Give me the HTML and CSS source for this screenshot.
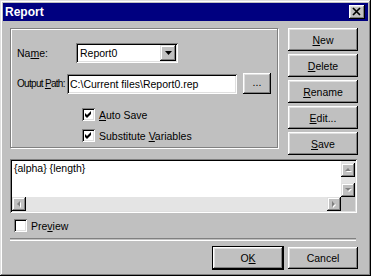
FILE: index.html
```html
<!DOCTYPE html>
<html lang="en">
<head>
    <meta charset="UTF-8">
    <title>Report</title>
    <link rel="stylesheet" href="styles.css">
</head>
<body>
    <div class="window">
        <div class="titlebar">
            <span class="title">Report</span>
            <span class="close-btn">
                <svg width="16" height="14" viewBox="0 0 16 14">
                    <path d="M4 3 L11 10 M11 3 L4 10" stroke="#000" stroke-width="1.7" fill="none"/>
                </svg>
            </span>
        </div>

        <div class="content">
            <div class="top">
                <div class="group">
                    <div class="row row-name">
                        <label class="lbl lbl-name">Na<u>m</u>e:</label>
                        <div class="combo">
                            <span class="combo-text">Report0</span>
                            <span class="combo-btn">
                                <svg width="7" height="4" viewBox="0 0 7 4"><path d="M0 0 H7 L3.5 4 Z" fill="#000"/></svg>
                            </span>
                        </div>
                    </div>
                    <div class="row row-path">
                        <label class="lbl lbl-path">Output <u>P</u>ath:</label>
                        <div class="field">C:\Current files\Report0.rep</div>
                        <span class="btn btn-browse">...</span>
                    </div>
                    <div class="check-row check-first">
                        <span class="check">
                            <svg width="9" height="9" viewBox="0 0 9 9"><polygon points="1,3 3,5 7,1 7,4 3,8 1,6" fill="#000"/></svg>
                        </span>
                        <span><u>A</u>uto Save</span>
                    </div>
                    <div class="check-row">
                        <span class="check">
                            <svg width="9" height="9" viewBox="0 0 9 9"><polygon points="1,3 3,5 7,1 7,4 3,8 1,6" fill="#000"/></svg>
                        </span>
                        <span>Substitute <u>V</u>ariables</span>
                    </div>
                </div>

                <div class="side-buttons">
                    <span class="btn"><u>N</u>ew</span>
                    <span class="btn"><u>D</u>elete</span>
                    <span class="btn"><u>R</u>ename</span>
                    <span class="btn"><u>E</u>dit...</span>
                    <span class="btn"><u>S</u>ave</span>
                </div>
            </div>

            <div class="editor">
                <div class="editor-text">{alpha} {length}</div>
                <div class="vscroll">
                    <span class="sb-btn">
                        <svg width="8" height="5" viewBox="0 0 8 5"><path d="M4 0 L7 3 H1 Z" fill="#fff" transform="translate(1,1)"/><path d="M4 0 L7 3 H1 Z" fill="#808080"/></svg>
                    </span>
                    <span class="sb-track"></span>
                    <span class="sb-btn">
                        <svg width="8" height="5" viewBox="0 0 8 5"><path d="M1 0 H7 L4 3 Z" fill="#fff" transform="translate(1,1)"/><path d="M1 0 H7 L4 3 Z" fill="#808080"/></svg>
                    </span>
                </div>
                <div class="hscroll">
                    <span class="sb-btn">
                        <svg width="5" height="8" viewBox="0 0 5 8"><path d="M3 1 V7 L0 4 Z" fill="#fff" transform="translate(1,1)"/><path d="M3 1 V7 L0 4 Z" fill="#808080"/></svg>
                    </span>
                    <span class="sb-track"></span>
                    <span class="sb-btn">
                        <svg width="5" height="8" viewBox="0 0 5 8"><path d="M0 1 V7 L3 4 Z" fill="#fff" transform="translate(1,1)"/><path d="M0 1 V7 L3 4 Z" fill="#808080"/></svg>
                    </span>
                </div>
                <div class="corner"></div>
            </div>

            <div class="check-row preview-row">
                <span class="check"></span>
                <span>Pre<u>v</u>iew</span>
            </div>

            <div class="separator"></div>

            <div class="footer">
                <span class="btn btn-default">O<u>K</u></span>
                <span class="btn">Cancel</span>
            </div>
        </div>
    </div>
</body>
</html>
```

FILE: styles.css
```css
body {
    margin: 0;
    background: #c0c0c0;
}

.window {
    width: 371px;
    height: 276px;
    box-sizing: border-box;
    padding: 3px;
    background: #c0c0c0;
    color: #000;
    font-family: "Liberation Sans", Arial, sans-serif;
    font-size: 10.5px;
    box-shadow: inset -1px -1px #000, inset 1px 1px #dfdfdf,
                inset -2px -2px #808080, inset 2px 2px #fff;
}

/* title bar */
.titlebar {
    height: 18px;
    background: #000080;
    color: #fff;
    display: flex;
    align-items: center;
    justify-content: space-between;
    padding: 0 3px 0 2px;
}

.title {
    font-weight: bold;
    font-size: 12px;
}

.close-btn {
    width: 16px;
    height: 14px;
    background: #c0c0c0;
    box-shadow: inset -1px -1px #000, inset 1px 1px #fff,
                inset -2px -2px #808080, inset 2px 2px #dfdfdf;
}

.close-btn svg {
    display: block;
}

/* body */
.content {
    padding: 7px 10px 0 7px;
}

.top {
    display: flex;
    gap: 10px;
}

.group {
    width: 268px;
    height: 120px;
    box-sizing: border-box;
    border: 1px solid #808080;
    box-shadow: inset 1px 1px #fff, 1px 1px #fff;
    padding: 14px 0 0 6px;
}

.row {
    display: flex;
    align-items: center;
}

.row-name {
    height: 20px;
}

.row-path {
    height: 21px;
    margin-top: 10px;
}

.lbl {
    white-space: nowrap;
    flex: none;
}

.lbl-name {
    width: 59px;
}

.lbl-path {
    width: 50px;
    font-size: 10px;
    letter-spacing: -0.7px;
}

.combo,
.field {
    height: 20px;
    box-sizing: border-box;
    background: #fff;
    box-shadow: inset 1px 1px #808080, inset -1px -1px #fff,
                inset 2px 2px #000, inset -2px -2px #dfdfdf;
    display: flex;
    align-items: center;
}

.combo {
    width: 102px;
    padding: 2px;
    justify-content: space-between;
}

.combo-text {
    padding-left: 2px;
}

.combo-btn {
    width: 16px;
    height: 16px;
    background: #c0c0c0;
    display: flex;
    align-items: center;
    justify-content: center;
    box-shadow: inset -1px -1px #000, inset 1px 1px #dfdfdf,
                inset -2px -2px #808080, inset 2px 2px #fff;
}

.field {
    width: 170px;
    flex: none;
    padding-left: 3px;
    white-space: nowrap;
    overflow: hidden;
}

/* buttons */
.btn {
    display: flex;
    align-items: center;
    justify-content: center;
    box-sizing: border-box;
    background: #c0c0c0;
    box-shadow: inset -1px -1px #000, inset 1px 1px #fff,
                inset -2px -2px #808080, inset 2px 2px #dfdfdf;
}

.btn-browse {
    width: 28px;
    height: 21px;
    margin-left: 6px;
    padding-bottom: 3px;
}

.side-buttons {
    display: flex;
    flex-direction: column;
    gap: 3px;
}

.side-buttons .btn {
    width: 70px;
    height: 23px;
}

/* checkboxes */
.check-row {
    display: flex;
    align-items: center;
    gap: 4px;
    height: 13px;
    margin: 8px 0 0 65px;
}

.check-first {
    margin-top: 14px;
}

.check {
    width: 13px;
    height: 13px;
    box-sizing: border-box;
    padding: 2px;
    background: #fff;
    box-shadow: inset 1px 1px #808080, inset -1px -1px #fff,
                inset 2px 2px #000, inset -2px -2px #dfdfdf;
}

.check svg {
    display: block;
}

/* editor */
.editor {
    margin-top: 4px;
    width: 347px;
    height: 54px;
    box-sizing: border-box;
    padding: 2px;
    background: #fff;
    box-shadow: inset 1px 1px #808080, inset -1px -1px #fff,
                inset 2px 2px #000, inset -2px -2px #dfdfdf;
    display: grid;
    grid-template-columns: 1fr 14px;
    grid-template-rows: 1fr 14px;
}

.editor-text {
    padding: 1px 2px;
}

.vscroll,
.hscroll {
    display: flex;
    background: #e4e4e4;
}

.vscroll {
    flex-direction: column;
    padding-top: 2px;
}

.sb-btn {
    width: 14px;
    height: 14px;
    flex: none;
    display: flex;
    align-items: center;
    justify-content: center;
    background: #c0c0c0;
    box-shadow: inset -1px -1px #000, inset 1px 1px #dfdfdf,
                inset -2px -2px #808080, inset 2px 2px #fff;
}

.sb-track {
    flex: 1;
}

.corner {
    background: #c0c0c0;
}

.preview-row {
    margin: 6px 0 0 4px;
}

.separator {
    margin-top: 6px;
    width: 346px;
    height: 1px;
    border-top: 1px solid #808080;
    border-bottom: 1px solid #fff;
}

.footer {
    display: flex;
    justify-content: flex-end;
    gap: 5px;
    margin-top: 6px;
}

.footer .btn {
    width: 70px;
    height: 22px;
}

.btn-default {
    outline: 1px solid #000;
}
```
